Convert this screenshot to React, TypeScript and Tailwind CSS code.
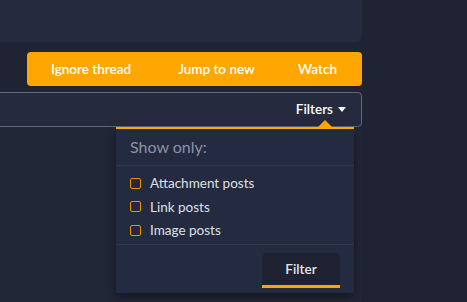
import React from 'react';

const options = ['Attachment posts', 'Link posts', 'Image posts'];

export default function App() {
    return (
        <div
            className="w-[467px] h-[302px] overflow-hidden bg-[#1f2333] flex"
            style={{ fontFamily: 'Lato, "Open Sans", sans-serif' }}
        >
            <div className="w-[362px] flex flex-col">
                <div className="h-[42px] bg-[#252a3e] rounded-br-md" />

                <div className="mt-[10px] ml-[27px] h-[34px] bg-[#ffa600] rounded-[4px] flex items-center text-white text-[13.5px] font-semibold">
                    <span className="ml-[24px]">Ignore thread</span>
                    <span className="ml-[47px]">Jump to new</span>
                    <span className="ml-auto mr-[25px]">Watch</span>
                </div>

                <div className="mt-[6px] -ml-px h-[35px] bg-[#252a3e] border border-[#62677a] rounded-r-[4px] flex items-center justify-end pr-[15px] text-white text-[13.5px] font-semibold">
                    <span>Filters</span>
                    <svg width="8" height="5" viewBox="0 0 8 5" className="ml-[5px]">
                        <path d="M0 0 L8 0 L4 5 Z" fill="#ffffff" />
                    </svg>
                </div>

                <div className="relative flex-1 bg-[#222738]">
                    <div className="absolute left-[116px] top-0 w-[238px] bg-[#242a3f] border-t-2 border-[#ffa600] shadow-[0_4px_10px_rgba(0,0,0,0.45)]">
                        <svg width="16" height="8" viewBox="0 0 16 8" className="absolute right-[21px] -top-[9px]">
                            <path d="M0 8 L8 0 L16 8 Z" fill="#ffa600" />
                        </svg>
                        <div className="h-[37px] px-[14px] flex items-center text-[#8b93a8] text-[16px] border-b border-[#31374b]">
                            Show only:
                        </div>
                        <div className="pt-[5.5px] pb-[2px] flex flex-col">
                            {options.map((o) => (
                                <label key={o} className="h-[23.5px] pl-[14px] flex items-center text-[#dde0e7] text-[13.5px]">
                                    <span className="w-[11px] h-[11px] border-[1.5px] border-[#e69600] rounded-[2px]" />
                                    <span className="ml-[9px]">{o}</span>
                                </label>
                            ))}
                        </div>
                        <div className="border-t border-[#31374b] h-[49px] flex items-start justify-end pr-[14px] pt-[8px]">
                            <button className="w-[78px] h-[35px] bg-[#1e2232] rounded-t-[5px] border-b-[3px] border-[#ffa600] text-[#e4e6eb] text-[13.5px] font-semibold">
                                Filter
                            </button>
                        </div>
                    </div>
                </div>
            </div>
        </div>
    );
}
